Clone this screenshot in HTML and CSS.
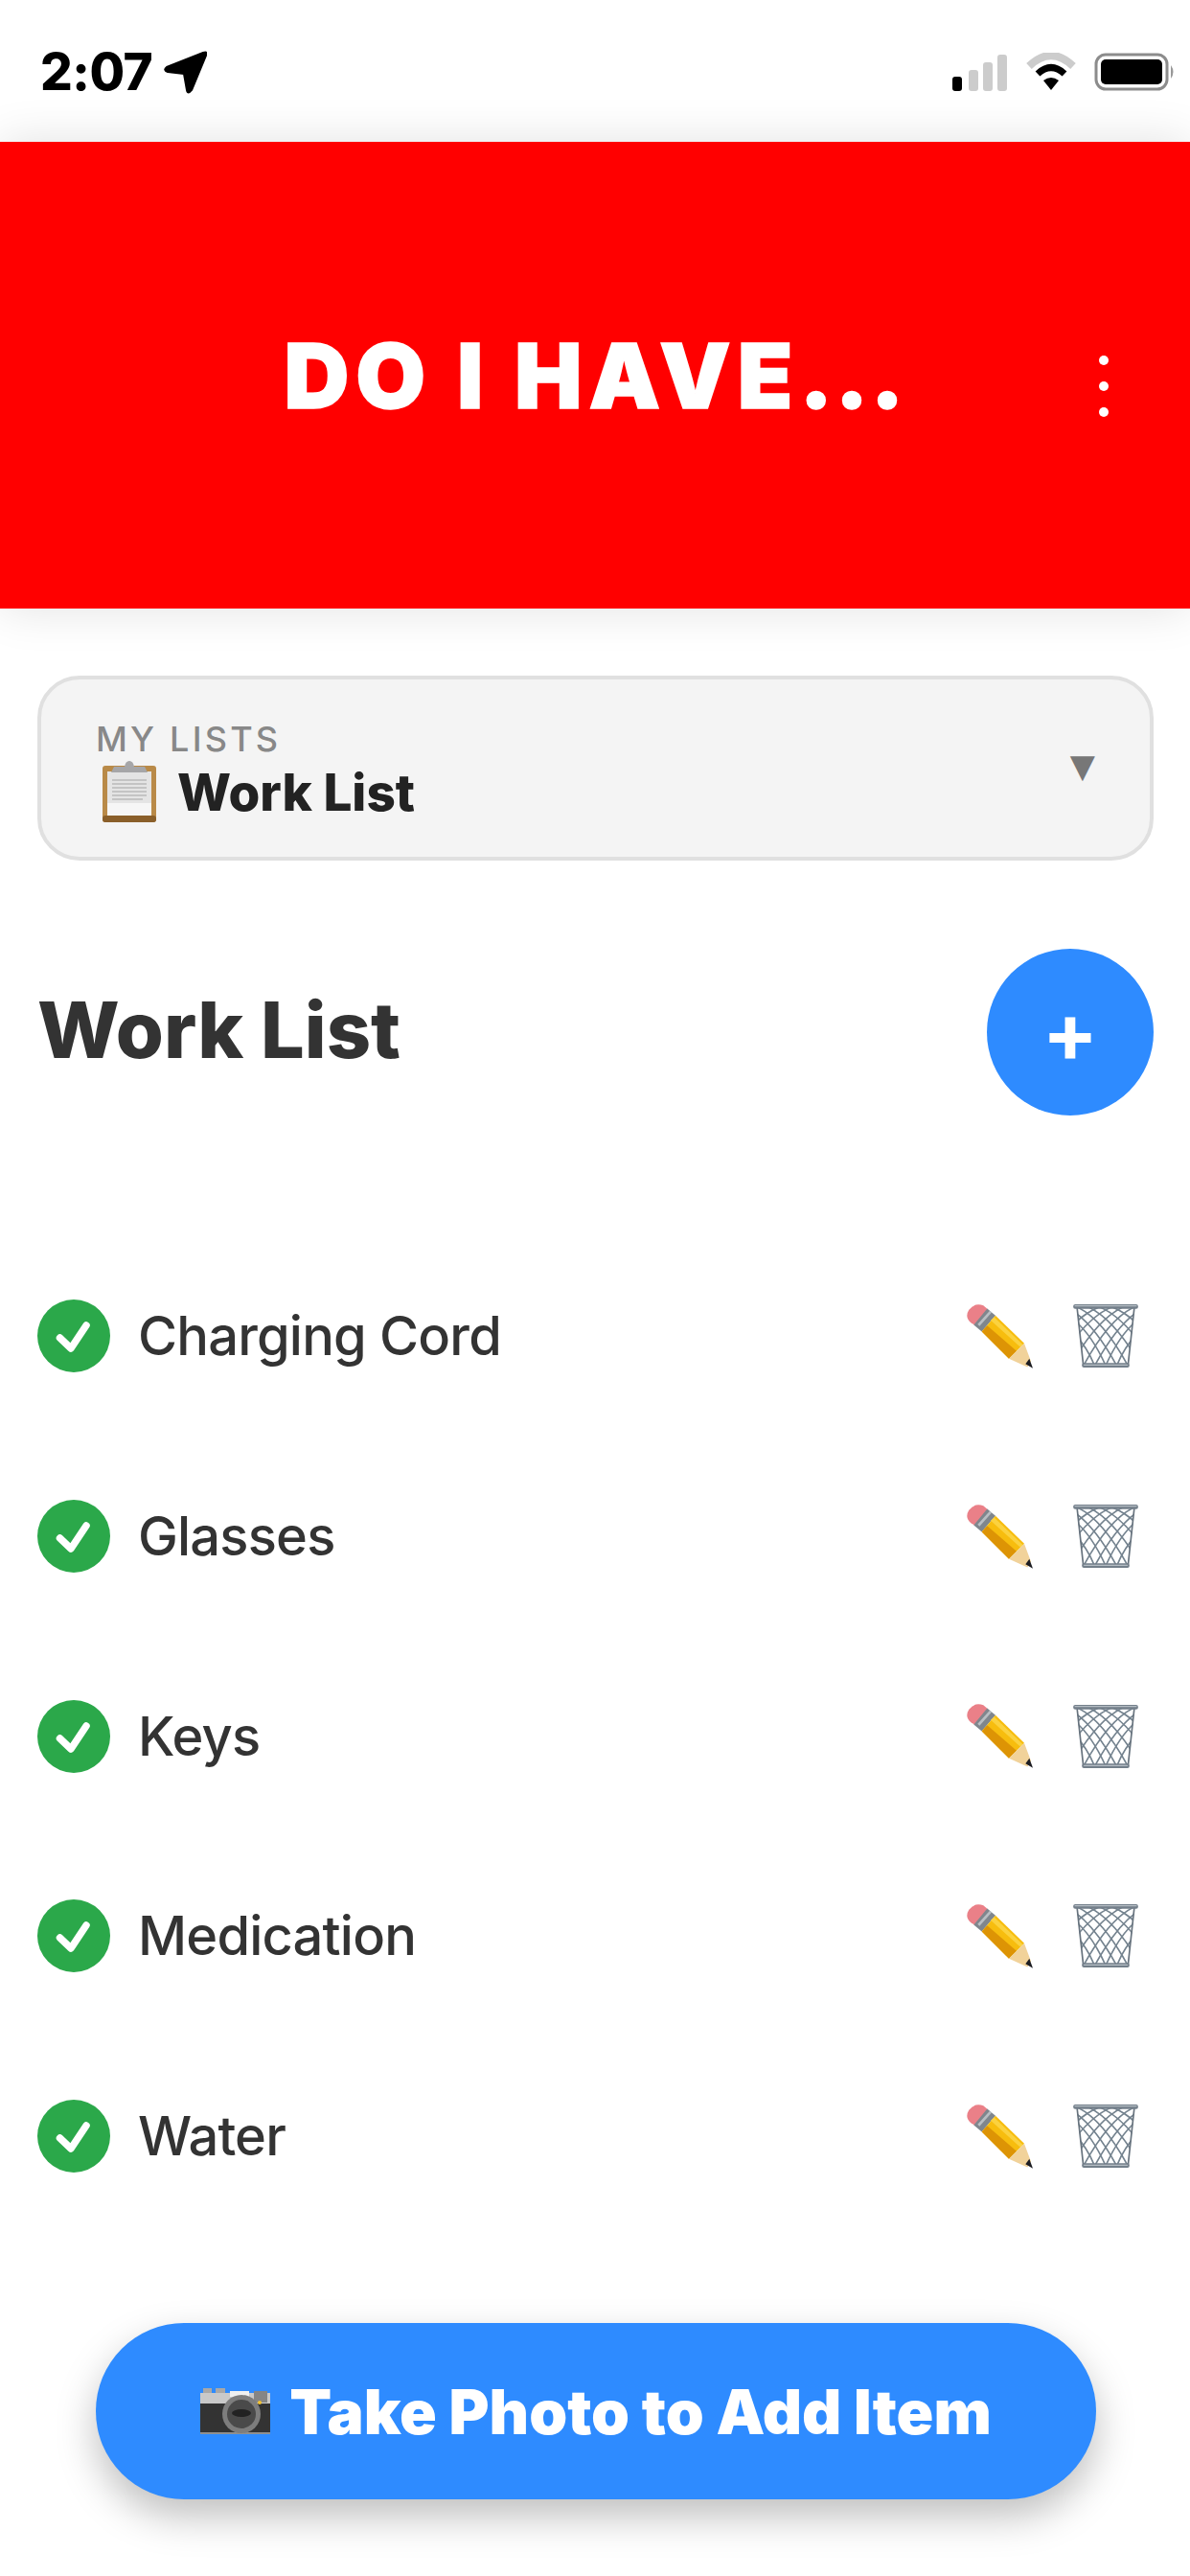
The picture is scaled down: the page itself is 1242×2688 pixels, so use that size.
FILE: index.html
```html
<!DOCTYPE html>
<html lang="en">
<head>
  <meta charset="UTF-8" />
  <title>Do I Have...</title>
  <link rel="stylesheet" href="styles.css">
</head>
<body>
  <svg class="defs" width="0" height="0">
    <defs>
      <symbol id="pencil" viewBox="0 0 210 200">
        <path d="M14 58 Q-8 40 7 17 Q25 -7 52 3 L66 15 L24 64 Z" fill="#ea8088"/>
        <path d="M22 64 L64 13 L90 35 L47 85 Z" fill="#7f868d"/>
        <path d="M34 62 L72 20 L78 25 L40 68 Z" fill="#b9bec3"/>
        <path d="M47 85 L90 35 L180 122 L132 170 Z" fill="#f7bd0e"/>
        <path d="M64 66 L156 146 L132 170 L47 85 Z" fill="#dd9405"/>
        <path d="M75 50 L168 134 L176 126 L86 40 Z" fill="#fbd23f"/>
        <path d="M132 170 L180 122 L201 178 L190 196 Z" fill="#f1d29a"/>
        <path d="M184 186 L196 170 L207 200 Z" fill="#1d1d22"/>
      </symbol>
      <symbol id="trash" viewBox="0 0 202 197">
        <clipPath id="trash-body"><path d="M10 10 H192 L172 186 H30 Z"/></clipPath>
        <g clip-path="url(#trash-body)" fill="none" stroke="#74838f" stroke-width="5">
          <path d="M-80 50 Q20 70 70 200 M-50 20 Q40 50 105 200 M-20 10 Q60 50 140 200 M15 10 Q95 50 175 200 M50 10 Q130 50 210 190 M85 10 Q155 40 230 150 M125 10 Q175 30 240 100"/>
          <path d="M282 50 Q182 70 132 200 M252 20 Q162 50 97 200 M222 10 Q142 50 62 200 M187 10 Q107 50 27 200 M152 10 Q72 50 -8 190 M117 10 Q47 40 -28 150 M77 10 Q27 30 -38 100"/>
        </g>
        <path d="M12 12 L31 186 M190 12 L171 186" stroke="#66727d" stroke-width="5"/>
        <rect x="0" y="0" width="202" height="14" rx="6" fill="#737f8a"/>
        <rect x="4" y="3" width="194" height="4" rx="2" fill="#b4bcc3"/>
        <rect x="27" y="183" width="148" height="14" rx="6" fill="#737f8a"/>
        <rect x="32" y="187" width="138" height="4" rx="2" fill="#b4bcc3"/>
      </symbol>
      <symbol id="clipboard" viewBox="0 0 56 64">
        <rect x="0" y="5" width="56" height="59" rx="3" fill="#b98a48"/>
        <rect x="0" y="57" width="56" height="7" rx="3" fill="#8a5f2a"/>
        <rect x="5" y="11" width="46" height="46" fill="#e4e4e4"/>
        <rect x="5" y="44" width="46" height="13" fill="#f6f6f6"/>
        <path d="M10 20 H46 M10 24 H46 M10 28 H46 M10 32 H46 M10 36 H46 M10 40 H42" stroke="#c4c4c4" stroke-width="2"/>
        <path d="M9 12 L12 6 H23 Q24 0 28 0 Q32 0 33 6 H44 L47 12 Z" fill="#a6a6a8"/>
      </symbol>
      <symbol id="camera" viewBox="0 0 73 48">
        <rect x="3" y="0" width="9" height="7" fill="#a8a8a8"/>
        <rect x="16" y="0" width="10" height="7" fill="#a8a8a8"/>
        <rect x="0" y="5" width="73" height="15" fill="#c9c9c9"/>
        <rect x="0" y="16" width="73" height="32" fill="#333"/>
        <rect x="31" y="3" width="20" height="6" fill="#f0f0f0"/>
        <rect x="56" y="3" width="14" height="12" fill="#858585"/>
        <rect x="0" y="46" width="73" height="2" fill="#8f8f8f"/>
        <circle cx="43" cy="27" r="20" fill="#7d7d7d"/>
        <circle cx="43" cy="27" r="15" fill="#4a4a4a"/>
        <ellipse cx="43" cy="26" rx="10" ry="4" fill="#222"/>
        <circle cx="62" cy="15" r="2" fill="#f2c230"/>
      </symbol>
      <symbol id="check" viewBox="0 0 76 76">
        <circle cx="38" cy="38" r="38" fill="#2ba84a"/>
        <path d="M23.5 40 L35 51 L51 27" fill="none" stroke="#fff" stroke-width="7.5" stroke-linecap="round" stroke-linejoin="round"/>
      </symbol>
    </defs>
  </svg>

  <div class="status-bar">
    <div class="status-time">
      <span>2:07</span>
      <svg class="status-arrow" viewBox="0 0 46 46"><path d="M42 3 Q47 1 45 6 L30 42 Q26 47 25 42 L22 25 L5 23 Q0 21 4 18 Z" fill="#000" stroke="#000" stroke-width="2" stroke-linejoin="round"/></svg>
    </div>
    <div class="status-icons">
      <svg class="status-signal" width="60" height="38" viewBox="0 0 60 38">
        <rect x="1" y="23" width="10" height="15" rx="3" fill="#000"/>
        <rect x="18" y="16" width="10" height="22" rx="3" fill="#ccc"/>
        <rect x="33" y="8" width="10" height="30" rx="3" fill="#ccc"/>
        <rect x="48" y="0" width="10" height="38" rx="3" fill="#ccc"/>
      </svg>
      <svg class="status-wifi" width="52" height="40" viewBox="0 0 52 40">
        <path d="M3 14 Q26 -8 49 14" fill="none" stroke="#ccc" stroke-width="8"/>
        <path d="M12 22 Q26 9 40 22" fill="none" stroke="#000" stroke-width="7"/>
        <path d="M26 39 L18 29 Q26 23 34 29 Z" fill="#000"/>
      </svg>
      <svg class="status-battery" width="85" height="40" viewBox="0 0 85 40">
        <rect x="2" y="2" width="74" height="36" rx="10" fill="none" stroke="#8c8c8c" stroke-width="3"/>
        <rect x="7" y="7" width="64" height="26" rx="5" fill="#000"/>
        <path d="M80 13 Q85 20 80 27 Z" fill="#999"/>
      </svg>
    </div>
  </div>

  <header class="app-header">
    <h1 class="app-title">DO I HAVE<span class="app-title-dots">...</span></h1>
    <div class="menu-dots"><span></span><span></span><span></span></div>
  </header>

  <div class="list-select">
    <div class="list-select-text">
      <div class="list-select-label">MY LISTS</div>
      <div class="list-select-value">
        <svg class="clipboard-icon"><use href="#clipboard"/></svg>
        <span>Work List</span>
      </div>
    </div>
    <span class="list-select-arrow">▼</span>
  </div>

  <div class="list-head">
    <h2 class="list-name">Work List</h2>
    <div class="add-btn">+</div>
  </div>

  <ul class="items">
    <li class="item">
      <svg class="check"><use href="#check"/></svg>
      <span class="item-name">Charging Cord</span>
      <svg class="icon-pencil"><use href="#pencil"/></svg>
      <svg class="icon-trash"><use href="#trash"/></svg>
    </li>
    <li class="item">
      <svg class="check"><use href="#check"/></svg>
      <span class="item-name">Glasses</span>
      <svg class="icon-pencil"><use href="#pencil"/></svg>
      <svg class="icon-trash"><use href="#trash"/></svg>
    </li>
    <li class="item">
      <svg class="check"><use href="#check"/></svg>
      <span class="item-name">Keys</span>
      <svg class="icon-pencil"><use href="#pencil"/></svg>
      <svg class="icon-trash"><use href="#trash"/></svg>
    </li>
    <li class="item">
      <svg class="check"><use href="#check"/></svg>
      <span class="item-name">Medication</span>
      <svg class="icon-pencil"><use href="#pencil"/></svg>
      <svg class="icon-trash"><use href="#trash"/></svg>
    </li>
    <li class="item">
      <svg class="check"><use href="#check"/></svg>
      <span class="item-name">Water</span>
      <svg class="icon-pencil"><use href="#pencil"/></svg>
      <svg class="icon-trash"><use href="#trash"/></svg>
    </li>
  </ul>

  <div class="photo-btn">
    <svg class="camera-icon"><use href="#camera"/></svg>
    <span>Take Photo to Add Item</span>
  </div>
</body>
</html>
```

FILE: styles.css
```css
html, body {
  margin: 0;
  padding: 0;
}

body {
  font-family: Inter, 'Liberation Sans', sans-serif;
  background: #fff;
  color: #333;
  width: 1242px;
  height: 2688px;
  overflow: hidden;
}

.defs {
  display: block;
  height: 0;
}

.status-bar {
  height: 148px;
  box-sizing: border-box;
  padding: 52px 15px 0 42px;
  display: flex;
  justify-content: space-between;
  align-items: flex-start;
}

.status-time {
  display: flex;
  align-items: center;
  gap: 11px;
  font-size: 53px;
  font-weight: 800;
  letter-spacing: -0.5px;
  line-height: 46px;
  color: #000;
}

.status-arrow {
  width: 46px;
  height: 46px;
}

.status-icons {
  display: flex;
  align-items: flex-end;
  gap: 18px;
  padding-top: 3px;
}

.status-wifi {
  margin-right: 1px;
}

.app-header {
  height: 487px;
  background: #ff0000;
  display: grid;
  grid-template-columns: 1fr auto 1fr;
  align-items: center;
  box-shadow: 0 0 46px rgba(0, 0, 0, 0.12);
}

.app-title {
  grid-column: 2;
  margin: 0;
  font-size: 94px;
  font-weight: 900;
  letter-spacing: 7px;
  color: #fff;
  -webkit-text-stroke: 1.5px #fff;
}

.app-title-dots {
  letter-spacing: 2px;
}

.menu-dots {
  grid-column: 3;
  justify-self: end;
  margin: 22px 85px 0 0;
  display: flex;
  flex-direction: column;
  gap: 17px;
}

.menu-dots span {
  width: 10px;
  height: 10px;
  border-radius: 50%;
  background: #fff;
}

.list-select {
  margin: 70px 38px 0 39px;
  height: 193px;
  box-sizing: border-box;
  background: #f4f4f4;
  border: 4px solid #e0e0e0;
  border-radius: 44px;
  padding: 4px 57px 0 57px;
  display: flex;
  align-items: center;
  justify-content: space-between;
}

.list-select-label {
  font-size: 36px;
  font-weight: 500;
  letter-spacing: 3.2px;
  line-height: 44px;
  color: #888;
}

.list-select-value {
  display: flex;
  align-items: center;
  gap: 22px;
  margin-left: 7px;
  font-size: 53px;
  font-weight: 800;
  color: #222;
  line-height: 64px;
}

.clipboard-icon {
  width: 56px;
  height: 64px;
}

.list-select-value span {
  padding-top: 2px;
}

.list-select-arrow {
  font-family: 'DejaVu Sans', sans-serif;
  font-size: 34px;
  color: #777;
  margin-bottom: 10px;
}

.list-head {
  margin: 92px 38px 0 39px;
  display: flex;
  align-items: center;
  justify-content: space-between;
}

.list-name {
  margin: 0 0 5px;
  font-size: 81px;
  font-weight: 800;
  color: #333;
}

.add-btn {
  width: 174px;
  height: 174px;
  border-radius: 50%;
  background: #2e8bff;
  color: #fff;
  font-size: 86px;
  font-weight: 700;
  display: flex;
  align-items: center;
  justify-content: center;
}

.items {
  list-style: none;
  margin: 126px 0 0;
  padding: 0 54px 0 39px;
}

.item {
  height: 208.7px;
  display: flex;
  align-items: center;
}

.check {
  width: 76px;
  height: 76px;
}

.item-name {
  flex: 1;
  margin-left: 29px;
  font-size: 56px;
  font-weight: 550;
  letter-spacing: -0.8px;
  color: #333;
}

.icon-pencil {
  width: 70px;
  height: 67px;
}

.icon-trash {
  width: 68px;
  height: 66px;
  margin-left: 41px;
}

.photo-btn {
  margin: 91px 98px 0 100px;
  height: 184px;
  border-radius: 92px;
  background: #2e8bff;
  color: #fff;
  display: flex;
  align-items: center;
  justify-content: center;
  gap: 20px;
  font-size: 64px;
  font-weight: 900;
  box-shadow: 0 18px 40px rgba(0, 0, 0, 0.25);
}

.camera-icon {
  width: 73px;
  height: 48px;
}
```
